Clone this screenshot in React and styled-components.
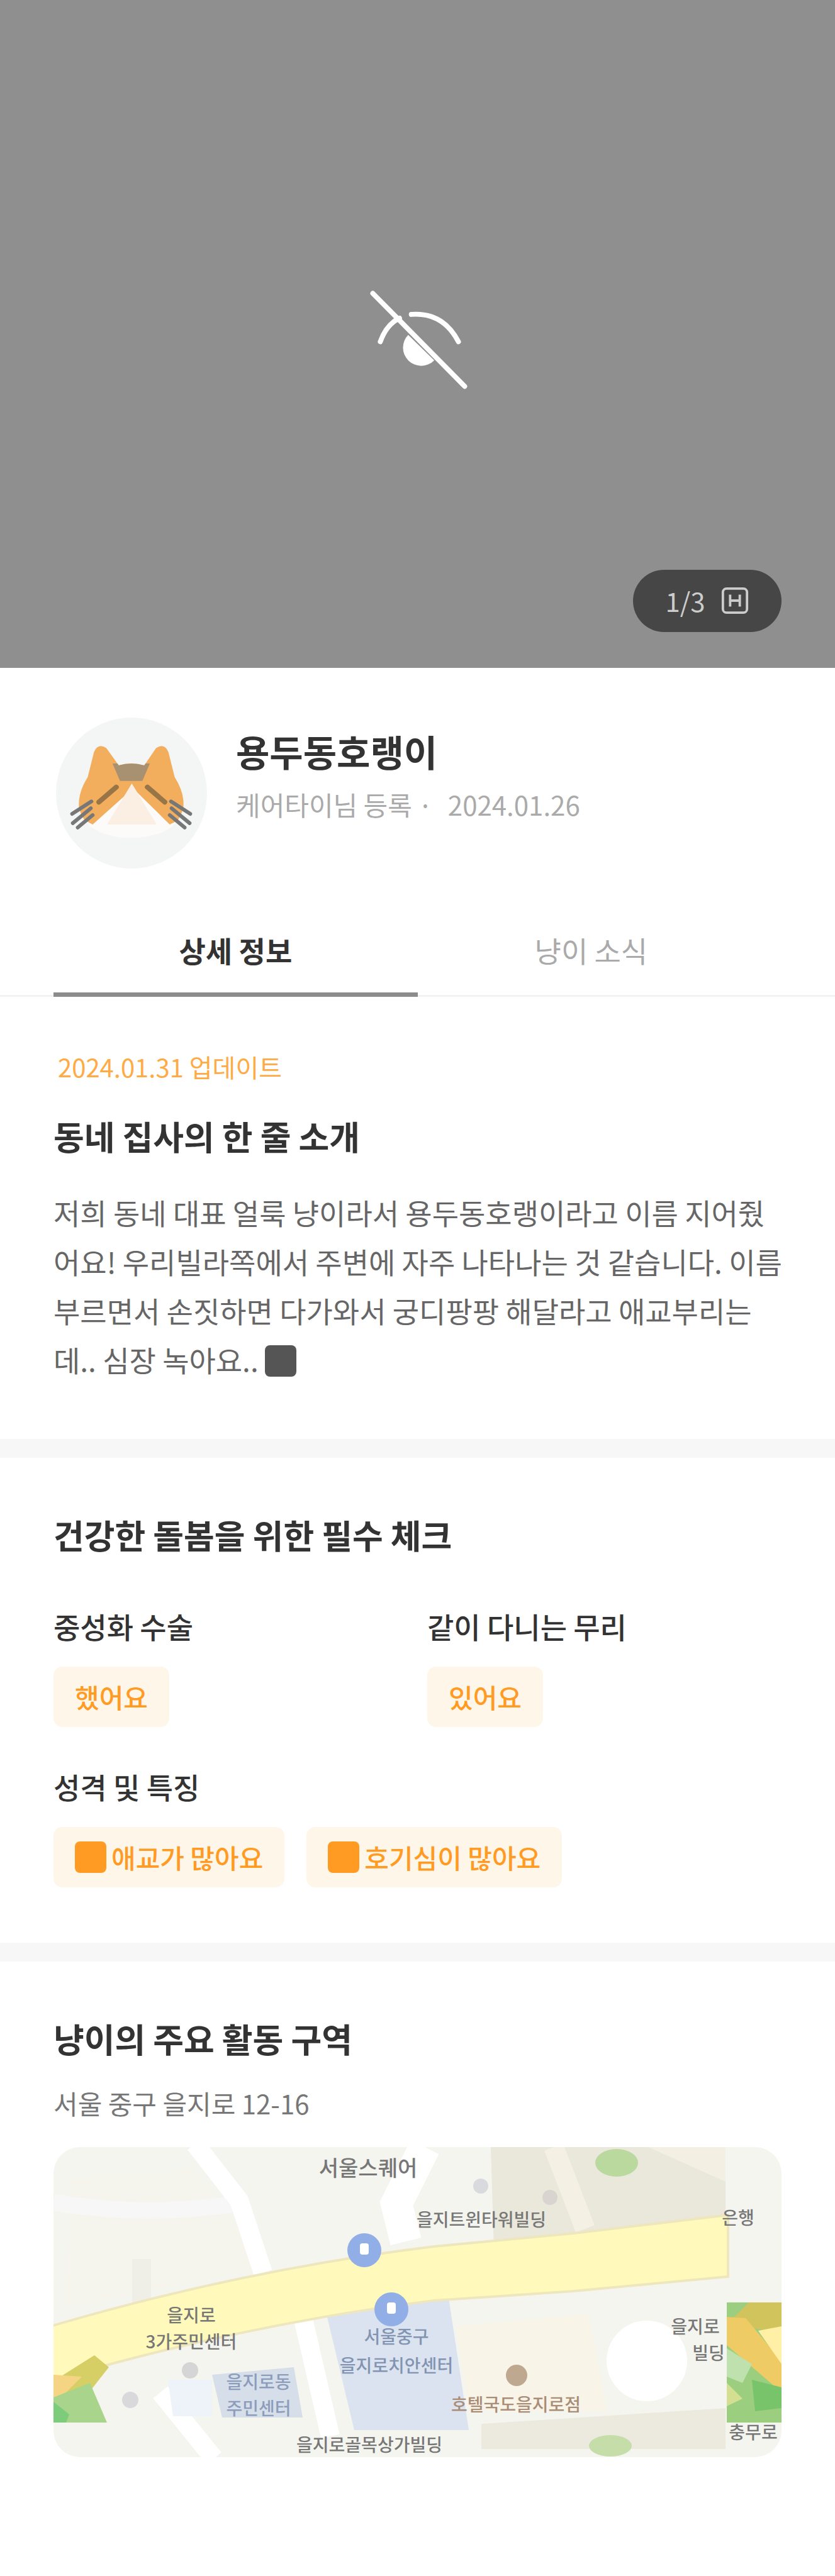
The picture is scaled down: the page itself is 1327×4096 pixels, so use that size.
import React, { useState } from "react";
import styled, { createGlobalStyle } from "styled-components";

const GlobalStyle = createGlobalStyle`
  *, *::before, *::after { box-sizing: border-box; }
  body {
    margin: 0;
    background: #ffffff;
    color: #333333;
    font-family: "Noto Sans CJK KR", "Noto Sans", sans-serif;
  }
  h1, h2, h3, p { margin: 0; }
`;

const Page = styled.main`
  width: 100%;
  padding-bottom: 85px;
`;

const Hero = styled.section`
  position: relative;
  display: flex;
  align-items: center;
  justify-content: center;
  width: 100%;
  aspect-ratio: 5 / 4;
  background: #8f8f8f;
`;

const HiddenIcon = styled.svg`
  width: 213px;
  height: 213px;
`;

const Counter = styled.button`
  position: absolute;
  right: 85px;
  bottom: 57px;
  display: flex;
  align-items: center;
  justify-content: center;
  gap: 24px;
  width: 236px;
  height: 99px;
  padding: 0;
  border: 0;
  border-radius: 50px;
  background: #464646;
  color: #cccccc;
  font-family: inherit;
  font-size: 42px;
  line-height: 56px;
`;

const CounterIcon = styled.svg`
  width: 46px;
  height: 46px;
`;

const Profile = styled.header`
  display: flex;
  gap: 46px;
  padding: 79px 85px 62px 89px;
`;

const Avatar = styled.svg`
  flex: none;
  width: 240px;
  height: 240px;
  border-radius: 50%;
  background: #f3f6f5;
`;

const ProfileText = styled.div`
  display: flex;
  flex-direction: column;
  gap: 14px;
  padding-top: 14px;
`;

const Name = styled.h1`
  font-size: 58px;
  line-height: 78px;
  font-weight: 700;
`;

const Meta = styled.p`
  color: #aaaaaa;
  font-size: 42px;
  line-height: 64px;
`;

const Divided = styled.span`
  margin-left: 24px;
`;

const Tabs = styled.nav`
  display: grid;
  grid-template-columns: 21fr 20fr;
  padding: 0 112px 0 85px;
  box-shadow: inset 0 -3px 0 #f2f2f2;
`;

const Tab = styled.button`
  height: 142px;
  padding: 0;
  border: 0;
  border-bottom: 7px solid ${(p) => (p.$active ? "#8c8c8c" : "transparent")};
  background: none;
  color: ${(p) => (p.$active ? "#333333" : "#aaaaaa")};
  font-family: inherit;
  font-size: 46px;
  line-height: 64px;
  font-weight: ${(p) => (p.$active ? 700 : 400)};
`;

const Section = styled.section`
  padding: 83px 85px 88px;
`;

const Divider = styled.hr`
  height: 30px;
  margin: 0;
  border: 0;
  background: #f7f7f7;
`;

const Updated = styled.p`
  margin-bottom: 43px;
  padding-left: 7px;
  color: #ffab45;
  font-size: 40px;
  line-height: 56px;
`;

const Title = styled.h2`
  font-size: 53px;
  line-height: 78px;
  font-weight: 700;
`;

const Story = styled.p`
  margin: 43px -16px 0 0;
  color: #666666;
  font-size: 46px;
  line-height: 78px;
`;

const Emoji = styled.span`
  display: inline-block;
  width: 50px;
  height: 50px;
  margin: ${(p) => (p.$inText ? "0" : "0 8px 0 0")};
  border-radius: 8px;
  background: ${(p) => (p.$inText ? "#555555" : "#ff9a22")};
  vertical-align: -8px;
`;

const Facts = styled.div`
  display: grid;
  grid-template-columns: 1fr 1fr;
  gap: 62px 31px;
  margin-top: 74px;
`;

const Fact = styled.div`
  grid-column: ${(p) => (p.$wide ? "1 / -1" : "auto")};
`;

const Label = styled.h3`
  margin-bottom: 33px;
  font-size: 46px;
  line-height: 64px;
  font-weight: 500;
`;

const Chips = styled.div`
  display: flex;
  flex-wrap: wrap;
  gap: 35px;
`;

const Chip = styled.span`
  display: flex;
  align-items: center;
  height: 96px;
  padding: 0 34px;
  border-radius: 14px;
  background: #fff6ea;
  color: #ff9a22;
  font-size: 42px;
  line-height: 56px;
  font-weight: 500;
`;

const Address = styled.p`
  margin: 36px 0 42px;
  color: #777777;
  font-size: 42px;
  line-height: 56px;
`;

const Map = styled.svg`
  display: block;
  width: 100%;
  border-radius: 42px;
  background: #f5f5f0;
`;

const MapLabel = styled.text`
  fill: ${(p) => p.$color || "#777777"};
  font-size: ${(p) => p.$size || 28}px;
  font-weight: 500;
  text-anchor: middle;
`;

const facts = [
  { label: "중성화 수술", chips: [{ text: "했어요" }] },
  { label: "같이 다니는 무리", chips: [{ text: "있어요" }] },
  {
    label: "성격 및 특징",
    wide: true,
    chips: [
      { text: "애교가 많아요", emoji: true },
      { text: "호기심이 많아요", emoji: true },
    ],
  },
];

function CatAvatar() {
  return (
    <Avatar viewBox="21 24 243 243" role="img" aria-label="고양이">
      <defs>
        <clipPath id="head">
          <path d="M72 120 L82 80 Q88 64 102 73 L122 101 Q142 95 163 101 L182 73 Q196 64 202 80 L212 120 Q228 145 226 168 Q216 216 142 218 Q68 216 58 168 Q56 145 72 120Z" />
        </clipPath>
      </defs>
      <g clipPath="url(#head)">
        <rect x="40" y="50" width="205" height="180" fill="#fcfbfa" />
        <path d="M50 50H236V180L204 196L145 138L80 196L50 180Z" fill="#f2ad5d" />
        <path d="M112 98h60l-12 28h-36z" fill="#a89170" />
        <path d="M143 130l40 66h-80z" fill="#fbefe3" />
      </g>
      <path d="M90 160l28-24M196 160l-28-24" stroke="#977547" strokeWidth="8" strokeLinecap="round" />
      <path d="M78 159l-31 20M77 170l-29 24M80 181l-24 20M206 159l31 20M207 170l29 24M204 181l24 20" stroke="#777777" strokeWidth="6" strokeLinecap="round" />
    </Avatar>
  );
}

function AreaMap() {
  return (
    <Map viewBox="0 0 1157 493" role="img" aria-label="활동 구역 지도">
      <path d="M25 50L220 35L285 110L330 195L20 255Z" fill="#f6f5ed" />
      <path d="M0 88Q150 112 290 90" fill="none" stroke="#f7f7f7" strokeWidth="26" />
      <rect x="125" y="178" width="30" height="75" fill="#efefe8" />
      <path d="M695 0H1068V125L700 165Z" fill="#eae7db" />
      <path d="M795 0L845 130" stroke="#f4f0e3" strokeWidth="32" />
      <path d="M945 0H1068V55Z" fill="#f3efe3" />
      <path d="M640 285L850 265L880 420L660 420Z" fill="#f8f4e8" />
      <path d="M680 440L1068 415V480L680 480Z" fill="#ece9df" />
      <path d="M225 -5L295 85L333 200M396 270L440 460M170 390L255 495" fill="none" stroke="#ffffff" strokeWidth="30" />
      <path d="M590 0L545 90L560 150" fill="none" stroke="#ffffff" strokeWidth="50" />
      <path d="M433 262L628 240L660 450H478Z" fill="#dae3ef" />
      <path d="M252 362L382 350L396 430L268 430Z" fill="#d6deea" />
      <path d="M182 370H252V428H190Z" fill="#edf3f8" />
      <path d="M-5 285Q300 195 605 158L827 137L1072 108V206L827 229L605 244Q300 282 -5 372Z" fill="#fffabb" stroke="#eee6bd" strokeWidth="4" />
      <circle cx="943" cy="340" r="64" fill="#ffffff" />

      <ellipse cx="895" cy="25" rx="34" ry="22" fill="#bad99f" />
      <ellipse cx="885" cy="475" rx="34" ry="17" fill="#c5dda9" />

      <path d="M0 372L65 331L88 350L55 392L0 400Z" fill="#d5cf66" />
      <path d="M0 362L45 365L0 410Z" fill="#f5d583" />
      <path d="M0 398L58 375L85 438H0Z" fill="#a8d48b" />
      <path d="M0 405L25 425L20 438H0Z" fill="#7dcc7c" />

      <path d="M1070 247H1157V438H1070Z" fill="#9bce7e" />
      <path d="M1105 247H1157V295L1070 282Z" fill="#d2c45d" />
      <path d="M1070 270L1100 272L1157 340V390L1070 315Z" fill="#eecb65" />
      <path d="M1120 292L1157 285V345Z" fill="#fff0a6" />
      <path d="M1070 320L1110 345L1095 375L1070 365Z" fill="#bee1ad" />
      <path d="M1110 370L1157 382V415L1115 420Z" fill="#78c46b" />
      <path d="M1070 375L1095 400L1070 412Z" fill="#d5df92" />

      <circle cx="494" cy="164" r="27" fill="#92aee6" />
      <circle cx="537" cy="258" r="27" fill="#92aee6" />
      <rect x="487" y="153" width="14" height="18" rx="4" fill="#ffffff" />
      <rect x="530" y="247" width="14" height="18" rx="4" fill="#ffffff" />
      <circle cx="736" cy="363" r="17" fill="#bfa890" />
      <circle cx="679" cy="62" r="12" fill="#d9dade" />
      <circle cx="789" cy="80" r="12" fill="#dad4d1" />
      <circle cx="217" cy="355" r="13" fill="#d6d5d5" />
      <circle cx="122" cy="402" r="13" fill="#d9d8da" />

      <MapLabel x="500" y="46" $size={34}>서울스퀘어</MapLabel>
      <MapLabel x="680" y="126">을지트윈타워빌딩</MapLabel>
      <MapLabel x="1088" y="123">은행</MapLabel>
      <MapLabel x="219" y="278">을지로</MapLabel>
      <MapLabel x="219" y="320">3가주민센터</MapLabel>
      <MapLabel x="545" y="312" $color="#8294b2">서울중구</MapLabel>
      <MapLabel x="545" y="358" $color="#8294b2">을지로치안센터</MapLabel>
      <MapLabel x="326" y="384" $color="#8c9dbb">을지로동</MapLabel>
      <MapLabel x="326" y="426" $color="#8c9dbb">주민센터</MapLabel>
      <MapLabel x="1020" y="296">을지로</MapLabel>
      <MapLabel x="1041" y="338">빌딩</MapLabel>
      <MapLabel x="735" y="420" $color="#a98d76">호텔국도을지로점</MapLabel>
      <MapLabel x="502" y="484">을지로골목상가빌딩</MapLabel>
      <MapLabel x="1112" y="464">충무로</MapLabel>
    </Map>
  );
}

export default function App() {
  const [tab, setTab] = useState("상세 정보");
  return (
    <>
      <GlobalStyle />
      <Page>
        <Hero>
          <HiddenIcon viewBox="4 -11 216 216" fill="none" role="img" aria-label="사진 숨김">
            <path d="M52 110Q62 82 83 72M102 66Q153 62 178 110" stroke="#ffffff" strokeWidth="8" strokeLinecap="round" />
            <path d="M97 99L139 140A26 26 0 1 1 97 99Z" fill="#ffffff" />
            <path d="M40 32L188 182" stroke="#ffffff" strokeWidth="8" strokeLinecap="round" />
          </HiddenIcon>
          <Counter type="button">
            1/3
            <CounterIcon viewBox="0 0 24 24" fill="none" stroke="currentColor" strokeWidth="2" aria-hidden="true">
              <rect x="2" y="2" width="20" height="20" rx="3" />
              <path d="M8 7v10M16 7v10M8 12h8" />
            </CounterIcon>
          </Counter>
        </Hero>

        <Profile>
          <CatAvatar />
          <ProfileText>
            <Name>용두동호랭이</Name>
            <Meta>
              케어타이님 등록 ·<Divided>2024.01.26</Divided>
            </Meta>
          </ProfileText>
        </Profile>

        <Tabs>
          {["상세 정보", "냥이 소식"].map((name) => (
            <Tab key={name} type="button" $active={tab === name} onClick={() => setTab(name)}>
              {name}
            </Tab>
          ))}
        </Tabs>

        <Section>
          <Updated>2024.01.31 업데이트</Updated>
          <Title>동네 집사의 한 줄 소개</Title>
          <Story>
            저희 동네 대표 얼룩 냥이라서 용두동호랭이라고 이름 지어줬
            <br />
            어요! 우리빌라쪽에서 주변에 자주 나타나는 것 같습니다. 이름
            <br />
            부르면서 손짓하면 다가와서 궁디팡팡 해달라고 애교부리는
            <br />
            데.. 심장 녹아요.. <Emoji $inText role="img" aria-label="하트" />
          </Story>
        </Section>
        <Divider />

        <Section>
          <Title>건강한 돌봄을 위한 필수 체크</Title>
          <Facts>
            {facts.map((fact) => (
              <Fact key={fact.label} $wide={fact.wide}>
                <Label>{fact.label}</Label>
                <Chips>
                  {fact.chips.map((chip) => (
                    <Chip key={chip.text}>
                      {chip.emoji && <Emoji aria-hidden="true" />}
                      {chip.text}
                    </Chip>
                  ))}
                </Chips>
              </Fact>
            ))}
          </Facts>
        </Section>
        <Divider />

        <Section>
          <Title>냥이의 주요 활동 구역</Title>
          <Address>서울 중구 을지로 12-16</Address>
          <AreaMap />
        </Section>
      </Page>
    </>
  );
}
